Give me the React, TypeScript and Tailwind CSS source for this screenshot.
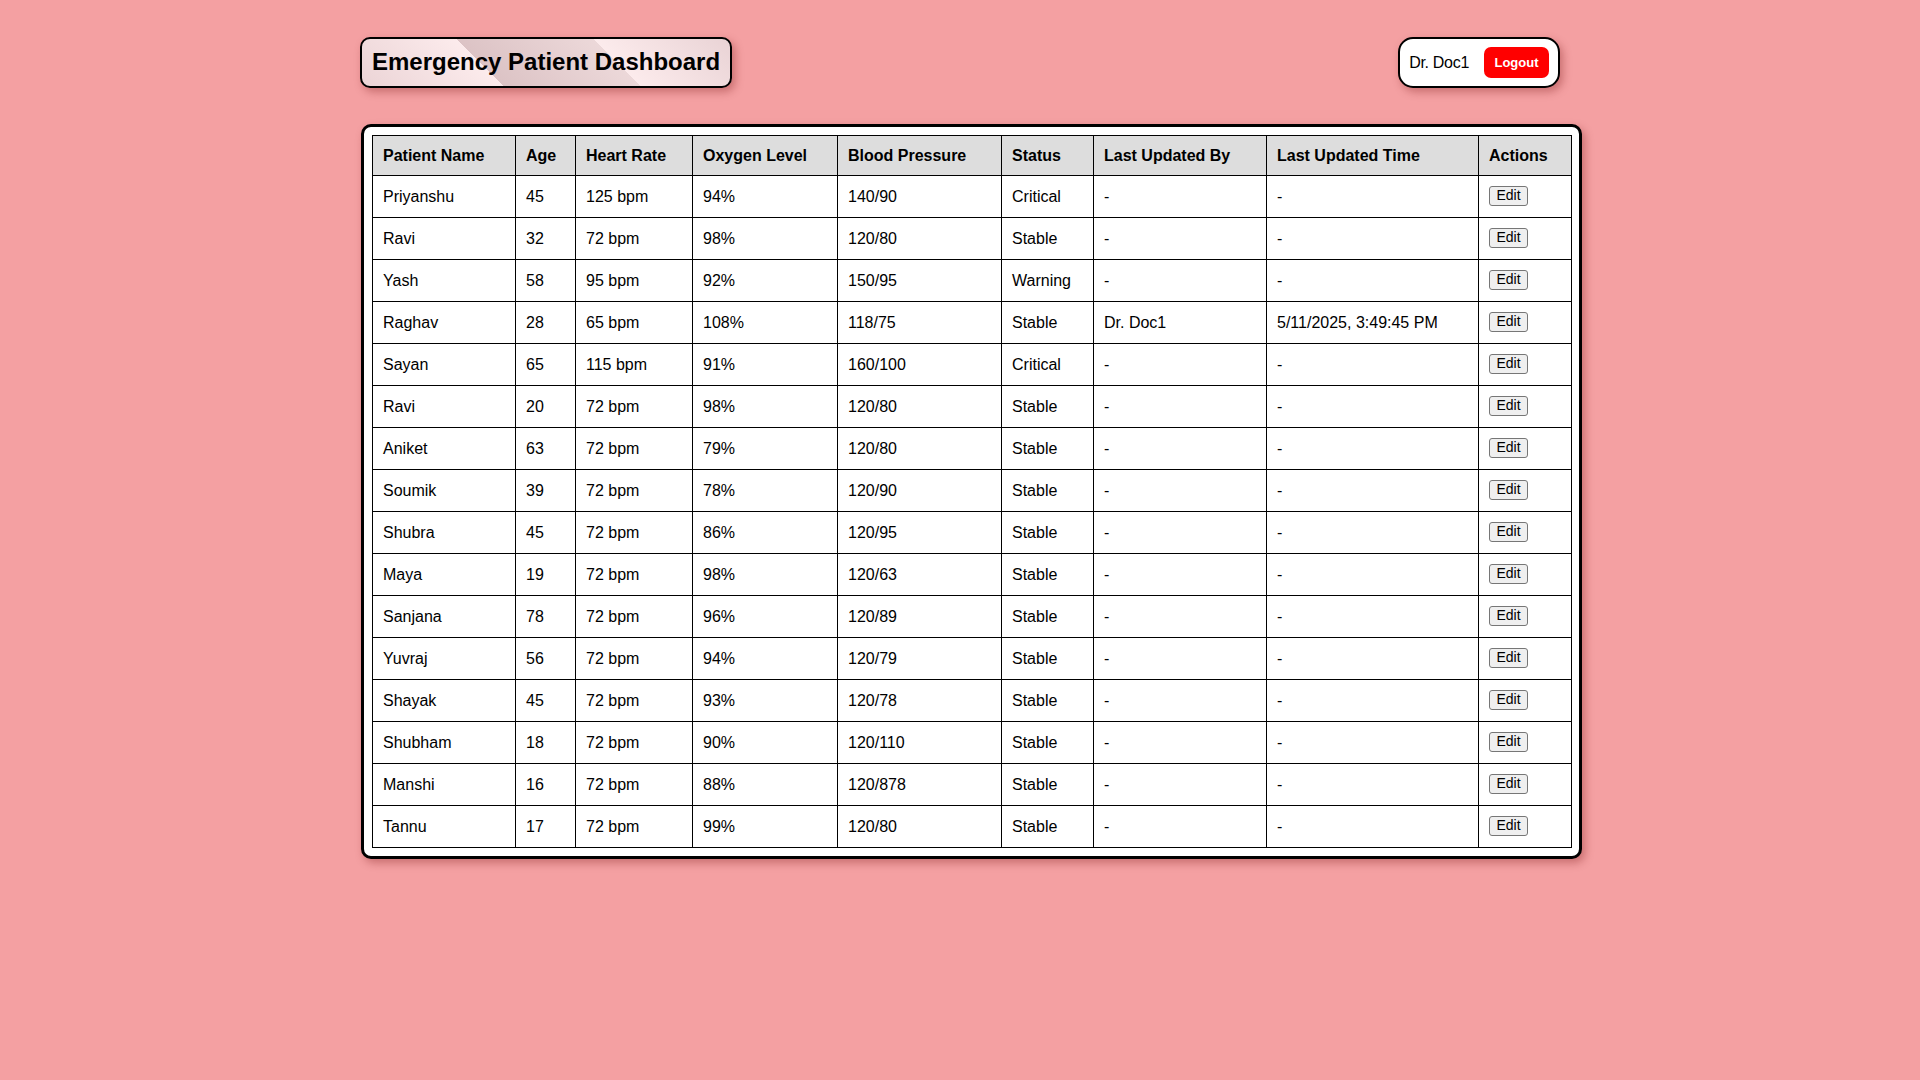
import React from "react"

interface Patient {
  name: string
  age: number
  heartRate: string
  oxygen: string
  bp: string
  status: string
  updatedBy: string
  updatedTime: string
}

const patients: Patient[] = [
  { name: "Priyanshu", age: 45, heartRate: "125 bpm", oxygen: "94%", bp: "140/90", status: "Critical", updatedBy: "-", updatedTime: "-" },
  { name: "Ravi", age: 32, heartRate: "72 bpm", oxygen: "98%", bp: "120/80", status: "Stable", updatedBy: "-", updatedTime: "-" },
  { name: "Yash", age: 58, heartRate: "95 bpm", oxygen: "92%", bp: "150/95", status: "Warning", updatedBy: "-", updatedTime: "-" },
  { name: "Raghav", age: 28, heartRate: "65 bpm", oxygen: "108%", bp: "118/75", status: "Stable", updatedBy: "Dr. Doc1", updatedTime: "5/11/2025, 3:49:45 PM" },
  { name: "Sayan", age: 65, heartRate: "115 bpm", oxygen: "91%", bp: "160/100", status: "Critical", updatedBy: "-", updatedTime: "-" },
  { name: "Ravi", age: 20, heartRate: "72 bpm", oxygen: "98%", bp: "120/80", status: "Stable", updatedBy: "-", updatedTime: "-" },
  { name: "Aniket", age: 63, heartRate: "72 bpm", oxygen: "79%", bp: "120/80", status: "Stable", updatedBy: "-", updatedTime: "-" },
  { name: "Soumik", age: 39, heartRate: "72 bpm", oxygen: "78%", bp: "120/90", status: "Stable", updatedBy: "-", updatedTime: "-" },
  { name: "Shubra", age: 45, heartRate: "72 bpm", oxygen: "86%", bp: "120/95", status: "Stable", updatedBy: "-", updatedTime: "-" },
  { name: "Maya", age: 19, heartRate: "72 bpm", oxygen: "98%", bp: "120/63", status: "Stable", updatedBy: "-", updatedTime: "-" },
  { name: "Sanjana", age: 78, heartRate: "72 bpm", oxygen: "96%", bp: "120/89", status: "Stable", updatedBy: "-", updatedTime: "-" },
  { name: "Yuvraj", age: 56, heartRate: "72 bpm", oxygen: "94%", bp: "120/79", status: "Stable", updatedBy: "-", updatedTime: "-" },
  { name: "Shayak", age: 45, heartRate: "72 bpm", oxygen: "93%", bp: "120/78", status: "Stable", updatedBy: "-", updatedTime: "-" },
  { name: "Shubham", age: 18, heartRate: "72 bpm", oxygen: "90%", bp: "120/110", status: "Stable", updatedBy: "-", updatedTime: "-" },
  { name: "Manshi", age: 16, heartRate: "72 bpm", oxygen: "88%", bp: "120/878", status: "Stable", updatedBy: "-", updatedTime: "-" },
  { name: "Tannu", age: 17, heartRate: "72 bpm", oxygen: "99%", bp: "120/80", status: "Stable", updatedBy: "-", updatedTime: "-" },
]

const headers = [
  "Patient Name",
  "Age",
  "Heart Rate",
  "Oxygen Level",
  "Blood Pressure",
  "Status",
  "Last Updated By",
  "Last Updated Time",
  "Actions",
]

// column widths measured off the screenshot
const colWidths = [143, 60, 117, 145, 164, 92, 173, 212, 93]

const App = () => {
  return (
    <div
      className="min-h-screen bg-[#f4a0a2] text-black"
      style={{ fontFamily: '"Liberation Sans", Arial, sans-serif' }}
    >
      <div className="pt-[37px] pl-[360px]">
        <div className="flex w-[1200px] items-start justify-between">
          <h1 className="rounded-[10px] border-2 border-black bg-[linear-gradient(45deg,#ebd4d6_0%,#fcebec_34%,#dcc3c5_34%,#ecd8d9_67%,#fcebec_67%,#e9d3d5_100%)] px-[10px] pt-[9px] pb-[11px] text-[24px] leading-[27px] font-bold shadow-[3px_4px_8px_rgba(120,20,20,0.35)]">
            Emergency Patient Dashboard
          </h1>
          <div className="flex h-[51px] items-center rounded-[15px] border-2 border-black bg-white pr-[9px] pl-[9px] shadow-[3px_4px_8px_rgba(120,20,20,0.35)]">
            <span className="text-[16px] tracking-[-0.3px]">Dr. Doc1</span>
            <button className="ml-[15px] h-[31px] w-[65px] rounded-[7px] bg-[#ff0000] text-[13px] font-bold text-white">
              Logout
            </button>
          </div>
        </div>

        <div className="mt-[36px] ml-[1px] w-[1221px] rounded-[10px] border-[3px] border-black bg-white p-[8px] shadow-[3px_4px_8px_rgba(120,20,20,0.35)]">
          <table className="w-[1199px] table-fixed border-collapse text-[16px]">
            <colgroup>
              {colWidths.map((w, i) => (
                <col key={i} style={{ width: w }} />
              ))}
            </colgroup>
            <thead>
              <tr className="h-[40px] bg-[#dddddd]">
                {headers.map((h) => (
                  <th key={h} className="border border-black px-[10px] py-0 text-left font-bold">
                    {h}
                  </th>
                ))}
              </tr>
            </thead>
            <tbody>
              {patients.map((p, i) => (
                <tr key={i} className="h-[42px]">
                  <td className="border border-black px-[10px] py-0">{p.name}</td>
                  <td className="border border-black px-[10px] py-0">{p.age}</td>
                  <td className="border border-black px-[10px] py-0">{p.heartRate}</td>
                  <td className="border border-black px-[10px] py-0">{p.oxygen}</td>
                  <td className="border border-black px-[10px] py-0">{p.bp}</td>
                  <td className="border border-black px-[10px] py-0">{p.status}</td>
                  <td className="border border-black px-[10px] py-0">{p.updatedBy}</td>
                  <td className="border border-black px-[10px] py-0">{p.updatedTime}</td>
                  <td className="border border-black px-[10px] py-0">
                    <button className="-mt-[2px] block h-[20px] w-[39px] rounded-[3px] border border-[#767676] bg-[#efefef] text-center text-[14px] leading-[17px]">
                      Edit
                    </button>
                  </td>
                </tr>
              ))}
            </tbody>
          </table>
        </div>
      </div>
    </div>
  )
}

export default App
